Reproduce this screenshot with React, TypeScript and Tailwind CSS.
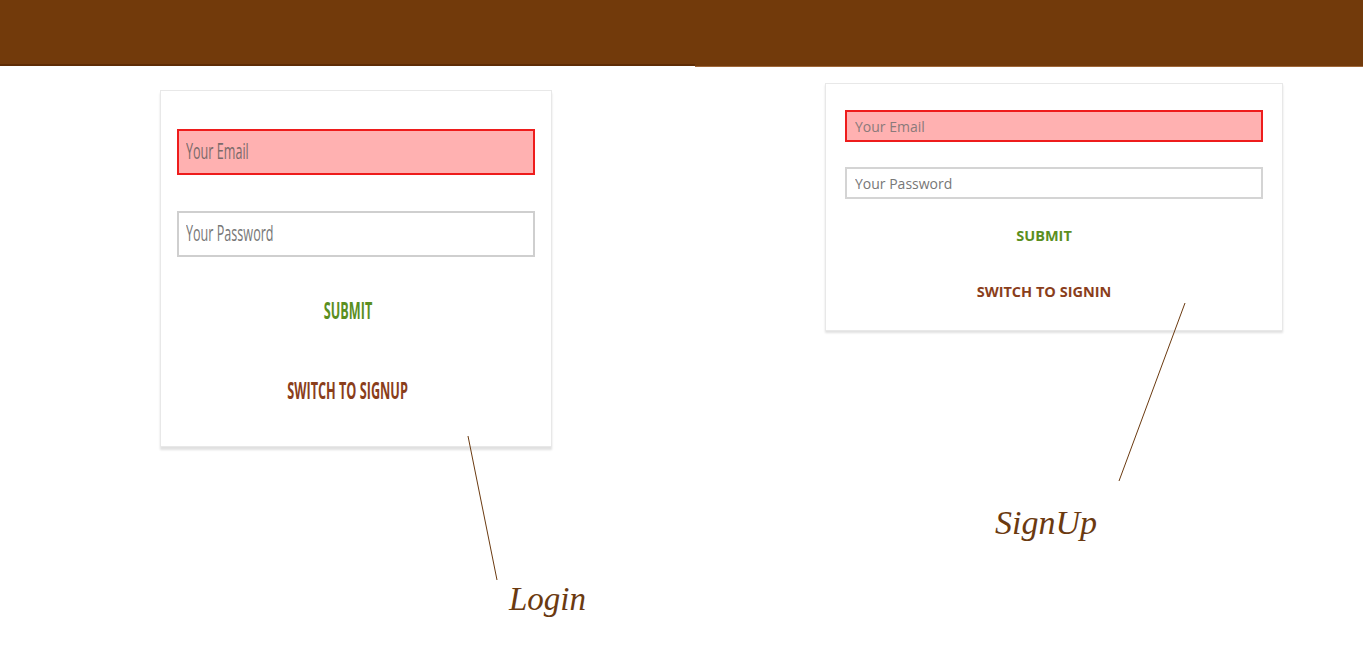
import React from "react";

const brown = "#723a0b";

function LoginShot() {
  return (
    <div className="ml-[160px] mt-[23px] w-[392px] h-[357px] bg-white border border-[#e8e8e8] shadow-[0_3px_2px_rgba(0,0,0,0.12)] pl-[16px] pr-[16px] pt-[38px] flex flex-col font-['Open_Sans',sans-serif]">
      <div className="h-[46px] bg-[#ffb1b1] border-2 border-[#ee1c1c] flex items-center pl-[7px] overflow-hidden">
        <span className="inline-block text-[21px] text-[#7a6a6a] origin-left scale-x-[0.6] whitespace-nowrap">Your Email</span>
      </div>
      <div className="mt-[36px] h-[46px] bg-white border-2 border-[#cfcfcf] flex items-center pl-[7px] overflow-hidden">
        <span className="inline-block text-[21px] text-[#777] origin-left scale-x-[0.6] whitespace-nowrap">Your Password</span>
      </div>
      <div className="mt-[38px] mr-[16px] h-[30px] flex items-center justify-center">
        <span className="inline-block text-[23px] font-bold text-[#5b8f1f] scale-x-[0.55] whitespace-nowrap">SUBMIT</span>
      </div>
      <div className="mt-[50px] mr-[16px] h-[30px] flex items-center justify-center">
        <span className="inline-block text-[23px] font-bold text-[#8a3e1b] scale-x-[0.55] whitespace-nowrap">SWITCH TO SIGNUP</span>
      </div>
    </div>
  );
}

function SignupShot() {
  return (
    <div className="ml-[273px] mt-[16px] w-[458px] h-[248px] bg-white border border-[#e8e8e8] shadow-[0_2px_2px_rgba(0,0,0,0.12)] px-[19px] pt-[26px] flex flex-col font-['Open_Sans',sans-serif]">
      <input
        readOnly
        placeholder="Your Email"
        className="h-[32px] w-full bg-[#ffb1b1] border-2 border-[#ee1c1c] px-[8px] text-[14px] outline-none placeholder:text-[#8a7a7a]"
      />
      <input
        readOnly
        placeholder="Your Password"
        className="mt-[25px] h-[32px] w-full bg-white border-2 border-[#d4d4d4] px-[8px] text-[14px] outline-none placeholder:text-[#777]"
      />
      <div className="mt-[26px] mr-[20px] h-[22px] flex items-center justify-center text-[14.5px] font-bold text-[#5b8f1f]">SUBMIT</div>
      <div className="mt-[34px] mr-[20px] h-[22px] flex items-center justify-center text-[14.5px] font-bold text-[#8a3e1b]">SWITCH TO SIGNIN</div>
    </div>
  );
}

export default function App() {
  return (
    <div className="relative w-[1363px] h-[649px] bg-white overflow-hidden">
      <div className="flex items-start">
        <div className="w-[695px] h-[66px] border-b-2 border-[#5e2c05]" style={{ background: brown }} />
        <div className="flex-1 h-[67px] border-b border-[#a0683a]" style={{ background: brown }} />
      </div>
      <div className="flex items-start">
        <LoginShot />
        <SignupShot />
      </div>

      {/* annotation pointers */}
      <svg className="absolute inset-0 pointer-events-none" width="1363" height="649">
        <line x1="468" y1="436" x2="497" y2="580" stroke="#6b3a10" strokeWidth="1" />
        <line x1="1185" y1="303" x2="1119" y2="481" stroke="#6b3a10" strokeWidth="1" />
      </svg>
      <div className="absolute left-[509px] top-[583px] text-[33px] italic text-[#6b3a10] font-['Liberation_Serif',serif] leading-none">Login</div>
      <div className="absolute left-[995px] top-[506px] text-[34px] italic text-[#6b3a10] font-['Liberation_Serif',serif] leading-none">SignUp</div>
    </div>
  );
}
